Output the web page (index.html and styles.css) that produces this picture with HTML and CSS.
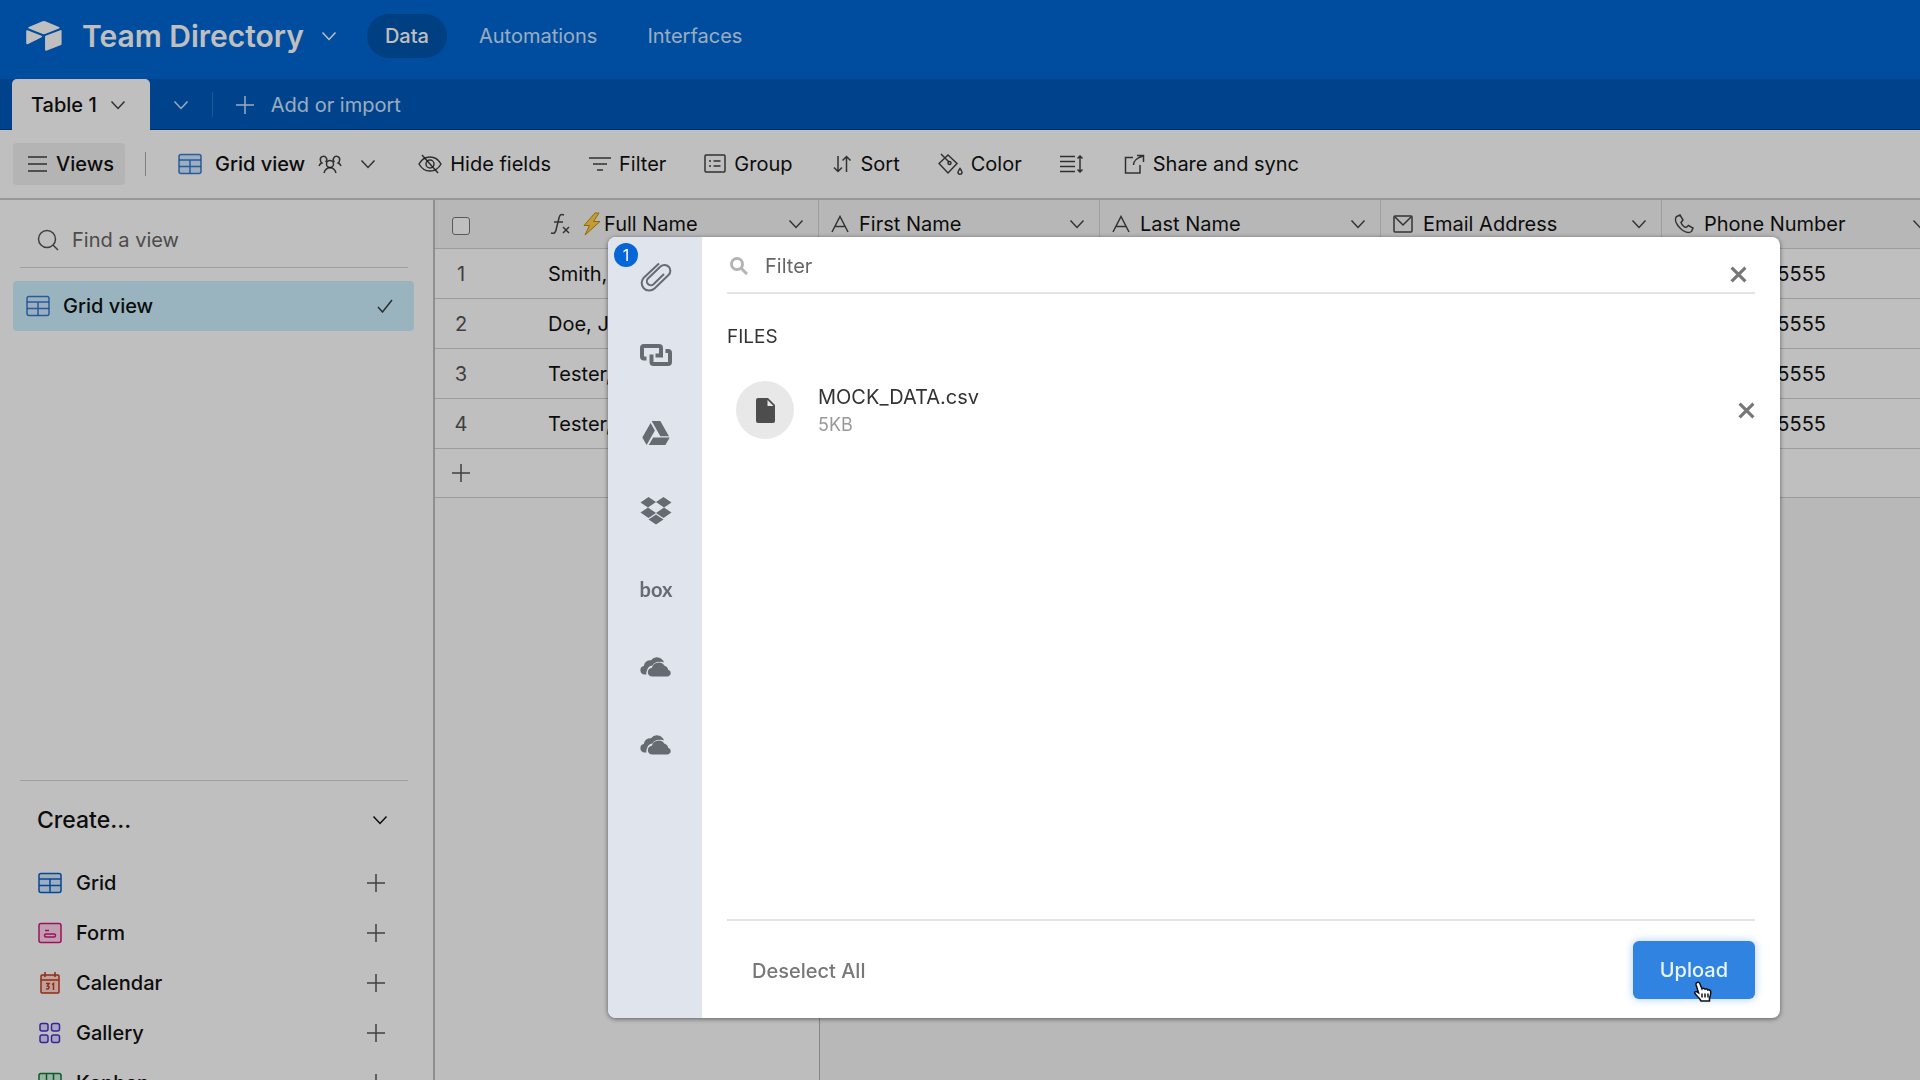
FILE: index.html
```html
<!DOCTYPE html>
<html lang="en">
<head>
    <meta charset="UTF-8">
    <meta name="viewport" content="width=device-width, initial-scale=1.0">
    <title>Team Directory</title>
    <link rel="stylesheet" href="styles.css">
</head>
<body>

    <!-- shared icons -->
    <svg class="sprite" aria-hidden="true">
        <symbol id="chevron" viewBox="0 0 16 16"><path d="M1.500 4.500 8 11.500l6.500-7"/></symbol>
        <symbol id="plus" viewBox="0 0 20 20"><path d="M10 1v18M1 10h18"/></symbol>
        <symbol id="cross" viewBox="0 0 16 16"><path d="M1.500 1.500l13 13M14.500 1.500l-13 13"/></symbol>
        <symbol id="grid" viewBox="0 0 24 22"><rect x="1" y="1.500" width="22" height="19" rx="2"/><path d="M1 7h22M1 13.500h22M12 7v13.500"/></symbol>
        <symbol id="letter" viewBox="0 0 18 18"><path d="M1 17 9 1.500 17 17M4 11.500h10"/></symbol>
        <symbol id="clouds" viewBox="0 0 32 20"><path d="M6.500 17.500H4.500A4.300 4.300 0 0 1 3.800 9 6.500 6.500 0 0 1 11 3.200 7.500 7.500 0 0 1 24 5.500a8 8 0 0 0-4-.6 8 8 0 0 0-7.500 3.500A6.500 6.500 0 0 0 7 13.500a5.500 5.500 0 0 0-.5 4z"/><path d="M12.500 19.500a4.400 4.400 0 0 1-.6-8.800 7 7 0 0 1 12.600-2 5 5 0 0 1 3.700 4A3.500 3.500 0 0 1 28 19.500z"/></symbol>
    </svg>

    <header class="topbar">
        <svg class="logo" viewBox="10 10 180 150"><path d="M90.039 12.368 24.079 39.660c-3.667 1.519-3.630 6.729.062 8.192l66.235 26.266a24.580 24.580 0 0 0 18.120 0l66.236-26.266c3.690-1.463 3.729-6.673.062-8.192l-65.960-27.292a24.580 24.580 0 0 0-18.795 0M105.312 88.460v65.617c0 3.120 3.147 5.258 6.048 4.108l73.806-28.648a4.420 4.420 0 0 0 2.790-4.108V59.813c0-3.121-3.147-5.258-6.048-4.108l-73.806 28.648a4.420 4.420 0 0 0-2.790 4.108M88.078 91.846l-21.904 10.576-2.224 1.075-46.238 22.155c-2.930 1.414-6.672-.722-6.672-3.978V60.088c0-1.178.604-2.195 1.414-2.960a5.090 5.090 0 0 1 1.069-.802c1.049-.630 2.546-.798 3.818-.294l70.117 27.780c3.564 1.415 3.844 6.408.620 8.034"/></svg>
        <h1>Team Directory</h1>
        <svg class="icon chev"><use href="#chevron"/></svg>
        <nav class="topnav">
            <a class="active" href="#">Data</a>
            <a href="#">Automations</a>
            <a href="#">Interfaces</a>
        </nav>
    </header>

    <div class="tabs">
        <button class="tab">Table 1 <svg class="icon chev"><use href="#chevron"/></svg></button>
        <button class="tab-list" aria-label="All tables"><svg class="icon chev"><use href="#chevron"/></svg></button>
        <button class="tab-add"><svg class="icon plus"><use href="#plus"/></svg>Add or import</button>
    </div>

    <div class="toolbar">
        <button class="tool views">
            <svg class="icon" width="19" height="18" viewBox="0 0 19 18"><path d="M0 2h19M0 9h19M0 16h19"/></svg>Views
        </button>
        <button class="tool current">
            <svg class="icon blue" width="24" height="22"><use href="#grid"/></svg>Grid view
            <svg class="icon" width="24" height="20" viewBox="0 0 24 20"><circle cx="12" cy="10" r="3.500"/><path d="M6 19c1-3.500 3-5.200 6-5.200s5 1.700 6 5.200M7.500 8A3.200 3.200 0 1 0 2.500 6.500c0 1 .5 2 1.300 2.500C2.500 9.500 1.500 10.500 1 12M16.500 8a3.200 3.200 0 1 1 5-1.500c0 1-.5 2-1.300 2.500 1.300.5 2.300 1.500 2.800 3"/></svg>
            <svg class="icon chev"><use href="#chevron"/></svg>
        </button>
        <button class="tool">
            <svg class="icon" width="24" height="20" viewBox="0 0 24 20"><path d="M1 10c2.500-4.600 6.200-7 11-7s8.500 2.400 11 7c-2.500 4.600-6.200 7-11 7S3.500 14.600 1 10z"/><circle cx="12" cy="10" r="4"/><path d="M4 1l16 18"/></svg>Hide fields
        </button>
        <button class="tool">
            <svg class="icon" width="22" height="16" viewBox="0 0 22 16"><path d="M0 2h22M4 8h14M8 14h6"/></svg>Filter
        </button>
        <button class="tool">
            <svg class="icon" width="22" height="20" viewBox="0 0 22 20"><rect x="1" y="1" width="20" height="17" rx="1"/><path d="M5 7h2M9.500 7h7M5 12h2M9.500 12h7"/></svg>Group
        </button>
        <button class="tool">
            <svg class="icon" width="22" height="18" viewBox="-2 0 22 18"><path d="M5 1v15M1 12.500 5 16.500l4-4M13.500 17V2M9.500 5.500l4-4 4 4"/></svg>Sort
        </button>
        <button class="tool">
            <svg class="icon" width="25" height="22" viewBox="0 0 25 22"><path d="M3 1l8 8M10 2l9 8.500-9 9.500-9-9.500zM22 15.500c-1.300 1.700-2 2.800-2 3.700a2 2 0 0 0 4 0c0-.9-.7-2-2-3.700z"/><circle cx="11.500" cy="10" r="1.500"/></svg>Color
        </button>
        <button class="tool" aria-label="Row height">
            <svg class="icon" width="26" height="18" viewBox="0 0 26 18"><path d="M0 1.500h15M0 6.500h15M0 11.500h15M0 16.500h15M20 1v16M17.500 3.500 20 1l2.500 2.500M17.500 14.500 20 17l2.500-2.500"/></svg>
        </button>
        <button class="tool">
            <svg class="icon" width="21" height="20" viewBox="0 0 21 20"><path d="M9 3.500H1.500V19H16v-8M9.500 11c0-4 2-6.500 9.500-9M13 1.500h6.500V8"/></svg>Share and sync
        </button>
    </div>

    <main class="workspace">
        <aside class="sidebar">
            <label class="find">
                <svg class="icon" width="22" height="22" viewBox="0 0 22 22"><circle cx="10" cy="10" r="8.500"/><path d="M16 16l5 5"/></svg>
                <input type="text" placeholder="Find a view" aria-label="Find a view">
            </label>
            <button class="view">
                <svg class="icon blue" width="24" height="22"><use href="#grid"/></svg>
                <span>Grid view</span>
                <svg class="icon" width="16" height="14" viewBox="0 0 16 14"><path d="M1 8l4.500 5L15 1"/></svg>
            </button>

            <section class="create">
                <h2>Create... <svg class="icon chev"><use href="#chevron"/></svg></h2>
                <button>
                    <svg class="icon blue" width="24" height="22"><use href="#grid"/></svg>
                    <span>Grid</span><svg class="icon plus"><use href="#plus"/></svg>
                </button>
                <button>
                    <svg class="icon pink" width="24" height="22" viewBox="0 0 24 22"><rect x="1" y="1.500" width="22" height="19" rx="2"/><path d="M7 8.500h4"/><rect x="6.500" y="12" width="11" height="3" rx="1.500"/></svg>
                    <span>Form</span><svg class="icon plus"><use href="#plus"/></svg>
                </button>
                <button>
                    <svg class="icon red" width="24" height="22" viewBox="0 0 24 22"><rect x="3" y="3" width="18" height="18" rx="1"/><path d="M3 8h18M7 0v5M17 0v5M8 11.500h3l-1.500 2.500c2.500 0 2 3.500-1.500 3M14 12.500l1.500-1V18"/></svg>
                    <span>Calendar</span><svg class="icon plus"><use href="#plus"/></svg>
                </button>
                <button>
                    <svg class="icon purple" width="24" height="22" viewBox="0 0 24 22"><rect x="2" y="1.500" width="8" height="7.500" rx="2"/><rect x="13.500" y="1.500" width="8" height="7.500" rx="2"/><rect x="2" y="13" width="8" height="7.500" rx="2"/><rect x="13.500" y="13" width="8" height="7.500" rx="2"/></svg>
                    <span>Gallery</span><svg class="icon plus"><use href="#plus"/></svg>
                </button>
                <button>
                    <svg class="icon green" width="24" height="22" viewBox="0 0 24 22"><rect x="1" y="1.500" width="22" height="19" rx="2"/><path d="M8.500 2v18M15.500 2v18"/></svg>
                    <span>Kanban</span><svg class="icon plus"><use href="#plus"/></svg>
                </button>
            </section>
        </aside>

        <div class="data">
            <table>
                <colgroup><col class="c-num"><col class="c-name"><col class="c-field"><col class="c-field"><col class="c-field"><col class="c-field"></colgroup>
                <thead>
                    <tr>
                        <th class="num"><input type="checkbox" aria-label="Select all"></th>
                        <th class="name"><div class="field">
                            <svg class="icon" width="20" height="22" viewBox="0 0 20 22"><path d="M14 2c-3-1.500-4.500 0-5 3L6 17c-.6 3-2 4-5 3M4 9h9M13 14l6 6M19 14l-6 6"/></svg>
                            <span class="label"><svg class="bolt" width="20" height="24" viewBox="0 0 20 24"><path d="M13 1 2 13.500h5.500L3 23 18 9.500h-6.500L17 1z"/></svg>Full Name</span>
                            <svg class="icon chev"><use href="#chevron"/></svg>
                        </div></th>
                        <th><div class="field">
                            <svg class="icon" width="18" height="18"><use href="#letter"/></svg>
                            <span class="label">First Name</span><svg class="icon chev"><use href="#chevron"/></svg>
                        </div></th>
                        <th><div class="field">
                            <svg class="icon" width="18" height="18"><use href="#letter"/></svg>
                            <span class="label">Last Name</span><svg class="icon chev"><use href="#chevron"/></svg>
                        </div></th>
                        <th><div class="field">
                            <svg class="icon" width="20" height="18" viewBox="0 0 20 18"><rect x="1" y="1" width="18" height="16" rx="1"/><path d="M2 2l8 8 8-8"/></svg>
                            <span class="label">Email Address</span><svg class="icon chev"><use href="#chevron"/></svg>
                        </div></th>
                        <th><div class="field">
                            <svg class="icon" width="20" height="20" viewBox="0 0 20 20"><path d="M6 1 2.500 2.500C0 6 3 11 6 14s8 6 11.500 3.500L19 14l-4.500-2.500-2.500 2c-2-.5-4-2.500-5-5l2-2.500z"/></svg>
                            <span class="label">Phone Number</span><svg class="icon chev"><use href="#chevron"/></svg>
                        </div></th>
                    </tr>
                </thead>
                <tbody>
                    <tr><td class="num">1</td><td class="name">Smith,</td><td></td><td></td><td></td><td>(555) 555-5555</td></tr>
                    <tr><td class="num">2</td><td class="name">Doe, J</td><td></td><td></td><td></td><td>(555) 555-5555</td></tr>
                    <tr><td class="num">3</td><td class="name">Tester,</td><td></td><td></td><td></td><td>(555) 555-5555</td></tr>
                    <tr><td class="num">4</td><td class="name">Tester,</td><td></td><td></td><td></td><td>(555) 555-5555</td></tr>
                    <tr class="add"><td class="num"><button aria-label="Add row"><svg class="icon plus"><use href="#plus"/></svg></button></td><td colspan="5"></td></tr>
                </tbody>
            </table>
            <div class="rest"></div>
        </div>
    </main>

    <div class="overlay">
        <div class="dialog" role="dialog" aria-label="Upload files">
            <nav class="sources">
                <button aria-label="Local files">
                    <svg class="line" width="32" height="30" viewBox="0 0 32 30"><path d="M19 1.500 4 15.500a7.500 7.500 0 0 0 10.500 11L28.500 13a5.800 5.800 0 0 0-8-8.500L8 16.500a4 4 0 0 0 5.500 5.800L24 12"/></svg>
                    <span class="badge">1</span>
                </button>
                <button aria-label="Link">
                    <svg class="line thick" width="32" height="22" viewBox="0 0 32 22"><path d="M6.500 14.500H4a2 2 0 0 1-2-2V4a2 2 0 0 1 2-2h15a2 2 0 0 1 2 2v7.500h-5.500M25.500 7H28a2 2 0 0 1 2 2v9a2 2 0 0 1-2 2H13.500a2 2 0 0 1-2-2v-7.500"/></svg>
                </button>
                <button aria-label="Google Drive">
                    <svg width="28" height="24" viewBox="1 2 22 19"><path d="M7.710 3.500 1.150 15l3.430 6 6.550-11.500M9.730 15 6.300 21h13.120l3.430-6M22.280 14 15.420 2H8.580l6.850 12z"/></svg>
                </button>
                <button aria-label="Dropbox">
                    <svg width="32" height="28" viewBox="0 0 32 28"><path d="M8.500 0 16 5 8 10.500.5 5.500zM23.500 0 31.500 5.500 24 10.500 16 5zM8 10.500l8 5.500-7.500 5-8-5.500zM24 10.500l7.500 5-8 5.500-7.500-5zM16 17.500l7.500 5-7.500 5-7.500-5z"/></svg>
                </button>
                <button class="box">box</button>
                <button aria-label="OneDrive"><svg width="32" height="20"><use href="#clouds"/></svg></button>
                <button aria-label="OneDrive for Business"><svg width="32" height="20"><use href="#clouds"/></svg></button>
            </nav>

            <div class="picker">
                <div class="filter">
                    <svg width="18" height="18" viewBox="0 0 18 18"><circle cx="7" cy="7" r="5.500"/><path d="M11 11l6 6"/></svg>
                    <input type="text" placeholder="Filter" aria-label="Filter">
                    <button class="close" aria-label="Close"><svg><use href="#cross"/></svg></button>
                </div>
                <div class="files">
                    <h3>FILES</h3>
                    <div class="file">
                        <span class="thumb"><svg width="19" height="25" viewBox="0 0 19 25"><path d="M2 0h10l7 7v16a2 2 0 0 1-2 2H2a2 2 0 0 1-2-2V2a2 2 0 0 1 2-2z"/><path class="fold" d="M11.500 2v6h6z"/></svg></span>
                        <div class="info">
                            <div>MOCK_DATA.csv</div>
                            <div class="size">5KB</div>
                        </div>
                        <button class="close" aria-label="Remove file"><svg><use href="#cross"/></svg></button>
                    </div>
                </div>
                <div class="actions">
                    <button class="deselect">Deselect All</button>
                    <button class="upload">Upload
                        <svg class="cursor" width="20" height="21" viewBox="0 0 20 21"><path d="M4 1.500c1.500-.8 2.500 0 3 1.500l2 5c.5-1 2.500-1 3 .2 1-.7 2.500-.3 2.800.8 1.200-.6 2.700 0 2.900 1.500.5 3-.5 4.500-1.200 6.500v3H8c-1-3-4.500-5-6-7.500-1-1.500.5-2.500 2-1.700l1.500 1L3 3.500C2.800 2.500 3.200 1.800 4 1.500z"/><path d="M9 12.500v4M12 12.500v4M15 12.500v4"/></svg>
                    </button>
                </div>
            </div>
        </div>
    </div>

</body>
</html>
```
FILE: styles.css
```css
* {
    box-sizing: border-box;
}
body {
    margin: 0;
    height: 100vh;
    display: flex;
    flex-direction: column;
    overflow: hidden;
    font-family: Inter, "Liberation Sans", sans-serif;
    font-size: 20px;
    line-height: 24px;
    color: #111;
    background: #fff;
}
button, input {
    font: inherit;
    color: inherit;
    border: none;
    background: none;
    padding: 0;
    margin: 0;
}
button {
    display: flex;
    align-items: center;
    white-space: nowrap;
}
h1, h2, h3 {
    margin: 0;
}
svg {
    flex: none;
}
.sprite {
    position: absolute;
    width: 0;
    height: 0;
}

/* icons */
.icon {
    fill: none;
    stroke: currentColor;
    stroke-width: 1.5;
}
.chev {
    width: 16px;
    height: 16px;
}
.plus {
    width: 20px;
    height: 20px;
}
.tool .icon, .view .icon, .tab .icon {
    stroke-opacity: 0.8;
}
.blue { color: #0f5fc2; fill: #d0e8ff; }
.pink { color: #d6167c; fill: #ffd6ec; }
.red { color: #c43a1c; fill: #ffd9cc; }
.purple { color: #4c2fd0; fill: #e0dcff; }
.green { color: #127a3c; fill: #cdf0da; }

/* header */
.topbar {
    flex: none;
    height: 79px;
    padding: 0 26px 7px;
    display: flex;
    align-items: center;
    color: #fff;
    background: #0066d5;
}
.logo {
    width: 36px;
    height: 30px;
    margin-right: 20px;
    fill: #fff;
}
h1 {
    margin-right: 17px;
    font-size: 30px;
    line-height: 36px;
    font-weight: 600;
}
.topnav {
    display: flex;
    gap: 14px;
    margin-left: 30px;
}
.topnav a {
    padding: 10px 18px;
    border-radius: 22px;
    color: #cfe6ff;
    text-decoration: none;
}
.topnav .active {
    color: #fff;
    background: #0054ac;
    font-weight: 500;
}

/* table tabs */
.tabs {
    flex: none;
    height: 51px;
    padding-left: 12px;
    display: flex;
    color: #cfe6ff;
    background: #005abb;
    box-shadow: inset 0 -1px #003f90;
}
.tab {
    gap: 13px;
    padding: 0 24px 0 19px;
    border-radius: 5px 5px 0 0;
    color: #111;
    background: #fff;
    font-weight: 500;
}
.tab-list {
    padding: 0 23px;
}
.tab-add {
    gap: 16px;
    margin: 13px 0;
    padding-left: 22px;
    border-left: 1px solid #2a74c6;
}

/* toolbar */
.toolbar {
    flex: none;
    height: 70px;
    padding: 0 13px;
    display: flex;
    align-items: center;
    gap: 38px;
    border-bottom: 2px solid #cacaca;
}
.tool {
    gap: 8px;
}
.views {
    height: 42px;
    padding: 0 11px 0 15px;
    border-radius: 4px;
    background: #f0f0f0;
    font-weight: 500;
    gap: 9px;
}
.current {
    margin-left: -18px;
    margin-right: 4px;
    padding-left: 32px;
    gap: 13px;
    border-left: 1px solid #aaa;
    font-weight: 500;
}
.current .chev {
    margin-left: 5px;
}

.workspace {
    flex: 1;
    min-height: 0;
    display: flex;
}

/* sidebar */
.sidebar {
    flex: none;
    width: 435px;
    padding: 0 19px 0 13px;
    display: flex;
    flex-direction: column;
    border-right: 2px solid #bfbfbf;
}
.find {
    display: flex;
    align-items: center;
    gap: 13px;
    height: 68px;
    margin: 0 6px 13px 7px;
    padding: 12px 17px 0;
    border-bottom: 1px solid #d6d6d6;
    color: #555;
}
.find input {
    flex: 1;
    min-width: 0;
}
input::placeholder {
    color: #666;
    opacity: 1;
}
.view {
    height: 50px;
    padding: 0 21px 0 13px;
    gap: 13px;
    border-radius: 4px;
    background: #cdf1ff;
    font-weight: 500;
}
.view span, .create span {
    flex: 1;
    text-align: left;
}
.create {
    height: 300px;
    margin: auto 6px 0 7px;
    border-top: 1px solid #d6d6d6;
    overflow: hidden;
}
.create h2 {
    display: flex;
    justify-content: space-between;
    align-items: center;
    padding: 25px 20px 24px 17px;
    font-size: 23px;
    line-height: 28px;
    font-weight: 500;
}
.create button {
    width: 100%;
    height: 50px;
    padding: 0 22px 0 18px;
    gap: 14px;
    font-weight: 500;
}
.create .plus {
    color: #555;
}

/* data grid */
.data {
    flex: 1;
    min-width: 0;
    display: flex;
    flex-direction: column;
    overflow: hidden;
}
table {
    width: 1508px;
    table-layout: fixed;
    border-collapse: separate;
    border-spacing: 0;
}
.c-num { width: 52px; }
.c-name { width: 332px; }
.c-field { width: 281px; }
th, td {
    height: 50px;
    padding: 0 13px;
    border-bottom: 1px solid #d0d0d0;
    border-right: 1px solid #d4d4d4;
    text-align: left;
    font-weight: 400;
}
th {
    height: 49px;
    padding: 0 14px 0 12px;
    background: #f5f5f5;
}
th.num, td.num {
    padding: 0;
    border-right: none;
    text-align: center;
    color: #555;
}
td.name {
    padding-left: 61px;
}
th.name {
    padding-left: 63px;
}
.num input {
    appearance: none;
    width: 18px;
    height: 18px;
    border: 1px solid #777;
    border-radius: 3px;
    background: #fff;
    vertical-align: middle;
}
.num button {
    margin: 0 auto;
}
.add td {
    height: 49px;
    border-right: none;
}
.field {
    display: flex;
    align-items: center;
    gap: 10px;
}
.field .icon {
    color: #444;
}
.label {
    flex: 1;
    display: flex;
    align-items: center;
    gap: 2px;
}
.bolt {
    margin-left: 2px;
    fill: #ffd24a;
    stroke: #c98a00;
}
.rest {
    flex: 1;
    background: #f6f6f6;
}
.rest::before {
    content: "";
    display: block;
    width: 384px;
    height: 100%;
    background: #fcfcfc;
    border-right: 1px solid #b4b4b4;
}

/* upload dialog */
.overlay {
    position: fixed;
    inset: 0;
    padding: 237px 140px 62px 608px;
    display: flex;
    background: rgba(0, 0, 0, 0.25);
}
.dialog {
    flex: 1;
    display: flex;
    border-radius: 8px;
    overflow: hidden;
    background: #fff;
    box-shadow: 0 1px 5px rgba(0, 0, 0, 0.5);
}
.sources {
    flex: none;
    width: 94px;
    background: #e0e5ed;
}
.sources button {
    position: relative;
    width: 100%;
    height: 78px;
    padding: 2px 0 0 2px;
    justify-content: center;
    color: #666b72;
}
.sources svg {
    fill: currentColor;
}
.sources .line {
    fill: none;
    stroke: currentColor;
    stroke-width: 2;
}
.sources .thick {
    stroke-width: 4;
}
.sources .box {
    font-family: Lato, sans-serif;
    font-size: 20px;
    font-weight: 700;
}
.badge {
    position: absolute;
    top: 6px;
    left: 6px;
    width: 24px;
    height: 24px;
    border-radius: 50%;
    color: #fff;
    background: #0666d8;
    font-size: 16px;
    text-align: center;
}
.picker {
    flex: 1;
    min-width: 0;
    padding: 0 25px;
    display: flex;
    flex-direction: column;
}
.filter {
    display: flex;
    align-items: center;
    gap: 17px;
    height: 57px;
    padding: 2px 8px 0 3px;
    border-bottom: 2px solid #e4e4e4;
}
.filter > svg {
    fill: none;
    stroke: #b4b4b4;
    stroke-width: 3;
}
.filter input {
    flex: 1;
}
.close svg {
    width: 17px;
    height: 17px;
    stroke: #777;
    stroke-width: 3;
}
.filter .close {
    padding-top: 18px;
}
.files {
    flex: 1;
    padding-top: 31px;
}
h3 {
    margin-bottom: 32px;
    font-size: 19px;
    font-weight: 400;
    color: #333;
}
.file {
    display: flex;
    align-items: center;
    padding-left: 9px;
}
.thumb {
    width: 58px;
    height: 58px;
    margin-right: 24px;
    display: flex;
    align-items: center;
    justify-content: center;
    border-radius: 50%;
    background: #e8e8e8;
}
.thumb svg {
    fill: #4d4d4d;
}
.thumb .fold {
    fill: #e8e8e8;
}
.info {
    flex: 1;
    padding-top: 2px;
    line-height: 28px;
    color: #333;
}
.size {
    font-size: 18px;
    color: #999;
}
.actions {
    display: flex;
    justify-content: space-between;
    align-items: center;
    padding: 20px 0 19px;
    border-top: 2px solid #e4e4e4;
}
.deselect {
    padding: 2px 25px 0;
    color: #777;
    font-weight: 500;
}
.upload {
    position: relative;
    height: 58px;
    padding: 0 27px;
    border-radius: 6px;
    color: #e8f4ff;
    background: #3083e0;
    box-shadow: 0 0 8px rgba(48, 131, 224, 0.4);
    font-weight: 500;
}
.cursor {
    position: absolute;
    left: 60px;
    top: 40px;
    fill: #fff;
    stroke: #111;
    stroke-width: 1.5;
}
```
